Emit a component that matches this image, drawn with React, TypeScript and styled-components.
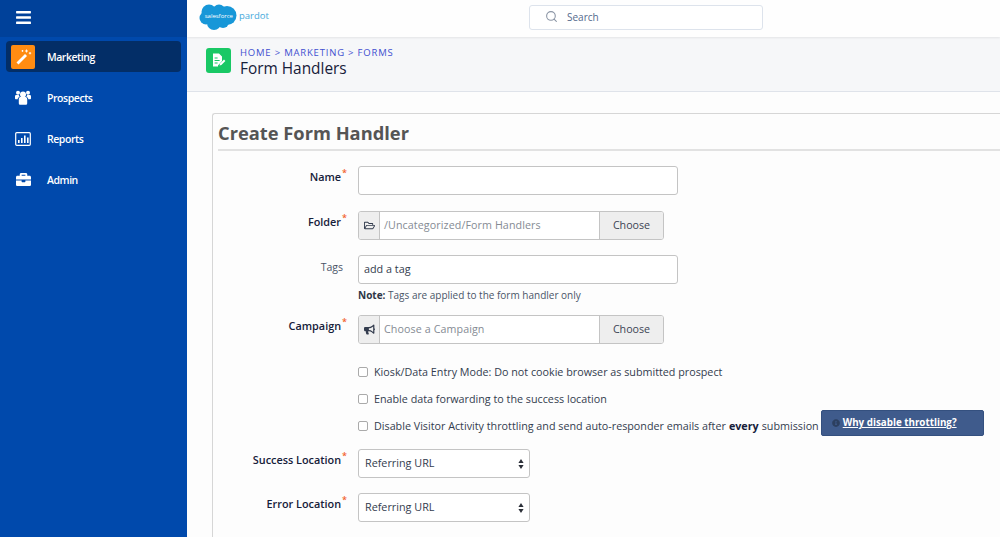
import React from "react";
import styled, { createGlobalStyle } from "styled-components";
import { FaBars, FaBriefcase, FaBullhorn, FaInfoCircle, FaRegFolderOpen } from "react-icons/fa";
import { Search } from "lucide-react";

const GlobalStyle = createGlobalStyle`
  html, body {
    margin: 0;
    padding: 0;
    height: 537px;
    overflow: hidden;
    background: #fdfdfd;
    font-family: "Open Sans", "Noto Sans", Arial, sans-serif;
    color: #16325c;
  }
  * { box-sizing: border-box; }
`;

const Shell = styled.div`
  display: flex;
  width: 1000px;
  height: 537px;
  overflow: hidden;
`;

const Sidebar = styled.aside`
  width: 187px;
  flex: none;
  background: #0049ac;
`;

const SideTop = styled.div`
  height: 37px;
  background: #00419a;
  padding: 9px 0 0 15px;
  color: #fff;
  font-size: 17px;
  line-height: 0;
`;

const SideNav = styled.nav`
  padding: 4px 6px 0;
  display: flex;
  flex-direction: column;
  gap: 10px;
`;

const SideItem = styled.div<{ $active?: boolean }>`
  height: 31px;
  display: flex;
  align-items: center;
  border-radius: 4px;
  padding-left: ${(p) => (p.$active ? "5px" : "9px")};
  background: ${(p) => (p.$active ? "#032e67" : "transparent")};
  color: #fff;
  font-size: 10.5px;
  font-weight: 600;
  letter-spacing: -0.45px;
`;

const SideIcon = styled.span<{ $active?: boolean }>`
  width: ${(p) => (p.$active ? "24px" : "16px")};
  height: ${(p) => (p.$active ? "24px" : "16px")};
  margin-right: ${(p) => (p.$active ? "12px" : "16px")};
  display: flex;
  align-items: center;
  justify-content: center;
  border-radius: 2px;
  background: ${(p) => (p.$active ? "#ff8c12" : "transparent")};
  font-size: 15px;
`;

const Main = styled.main`
  flex: 1;
  min-width: 0;
  display: flex;
  flex-direction: column;
`;

const TopBar = styled.header`
  height: 37px;
  flex: none;
  background: #fefefe;
  padding: 3px 0 0 12px;
  display: flex;
  align-items: flex-start;
  box-shadow: 0 1px 2px rgba(0, 0, 0, 0.08);
  position: relative;
`;

const Logo = styled.svg`
  width: 72px;
  height: 28px;
  flex: none;
`;

const SearchBox = styled.div`
  width: 234px;
  height: 25px;
  margin: 1.5px 0 0 258px;
  display: flex;
  align-items: center;
  gap: 9px;
  padding: 0 0 1px 15px;
  background: #fff;
  border: 1px solid #dde3ec;
  border-radius: 3px;
  font-size: 10px;
  color: #54698d;
`;

const PageHeader = styled.div`
  height: 55px;
  flex: none;
  display: flex;
  align-items: flex-start;
  padding: 11px 0 0 19px;
  background: #f6f7f9;
  border-bottom: 1px solid #dfe3ea;
`;

const HeaderIcon = styled.div`
  width: 25px;
  height: 25px;
  margin-right: 9px;
  border-radius: 3px;
  background: #19c865;
  display: flex;
  align-items: center;
  justify-content: center;
`;

const Crumbs = styled.div`
  font-size: 9.5px;
  line-height: 11px;
  letter-spacing: 0.8px;
  color: #3f4fd0;
  margin-top: -1px;
`;

const PageTitle = styled.h1`
  margin: 2px 0 0;
  font-size: 15.4px;
  line-height: 18px;
  font-weight: 400;
  color: #16203a;
`;

const Panel = styled.section`
  flex: 1;
  margin: 21px 0 0 25px;
  padding: 0 0 0 5px;
  border: 1px solid #d6d6d6;
  border-right: none;
  border-bottom: none;
  border-radius: 3px 0 0 0;
  background: #fdfdfd;
`;

const PanelTitle = styled.h2`
  margin: 0;
  height: 37px;
  padding-top: 6px;
  font-size: 18.3px;
  line-height: 25px;
  font-weight: 700;
  color: #555;
  border-bottom: 2px solid #e2e2e2;
`;

const Form = styled.div`
  padding-top: 15px;
  display: flex;
  flex-direction: column;
`;

const Row = styled.div<{ $gap?: number }>`
  display: grid;
  grid-template-columns: 129px 1fr;
  column-gap: 11px;
  margin-bottom: ${(p) => p.$gap ?? 16}px;
`;

const Label = styled.label<{ $plain?: boolean }>`
  text-align: right;
  font-size: ${(p) => (p.$plain ? "10.5px" : "10.85px")};
  line-height: ${(p) => (p.$plain ? "25px" : "22px")};
  font-weight: ${(p) => (p.$plain ? 400 : 600)};
  color: ${(p) => (p.$plain ? "#4a5568" : "#16203a")};
  padding-right: ${(p) => (p.$plain ? "4px" : "0")};
  white-space: nowrap;
  sup {
    color: #f2622e;
    font-size: 9px;
    line-height: 0;
    margin-left: 1px;
  }
`;

const TextBox = styled.div`
  width: 319.5px;
  height: 29px;
  padding: 0 0 2px 5px;
  display: flex;
  align-items: center;
  background: #fff;
  border: 1px solid #c4c4c4;
  border-radius: 3px;
  font-size: 10.8px;
  color: #333c4e;
`;

const Group = styled.div`
  width: 306px;
  height: 29px;
  display: flex;
  border: 1px solid #c4c4c4;
  border-radius: 3px;
  overflow: hidden;
  background: #fff;
  font-size: 10.7px;
`;

const Addon = styled.span`
  width: 21px;
  flex: none;
  display: flex;
  align-items: center;
  justify-content: center;
  background: #eeeeee;
  border-right: 1px solid #c4c4c4;
  font-size: 11px;
  color: #333c4e;
`;

const GroupValue = styled.span`
  flex: 1;
  padding: 0 0 2px 4px;
  display: flex;
  align-items: center;
  color: #858b94;
  letter-spacing: 0.1px;
`;

const ChooseButton = styled.span`
  width: 64px;
  flex: none;
  display: flex;
  align-items: center;
  justify-content: center;
  padding-bottom: 1px;
  background: #eeeeee;
  border-left: 1px solid #c4c4c4;
  color: #3c4454;
`;

const Note = styled.div`
  margin-top: 4px;
  font-size: 10px;
  line-height: 14px;
  color: #4a5568;
  b { color: #2e3646; font-weight: 700; }
`;

const Checks = styled.div`
  margin: 0 0 10px 140px;
  display: flex;
  flex-direction: column;
`;

const CheckRow = styled.div`
  height: 27px;
  display: flex;
  align-items: center;
  font-size: 10.75px;
  color: #333c4e;
  white-space: nowrap;
  b { font-weight: 700; color: #16203a; margin: 0 3px; }
`;

const CheckBox = styled.span`
  width: 10px;
  height: 10px;
  margin-right: 6px;
  flex: none;
  background: #fff;
  border: 1px solid #aaaaaa;
  border-radius: 2px;
`;

const Hint = styled.span`
  width: 163px;
  height: 26px;
  margin-left: 2px;
  margin-top: -6px;
  display: flex;
  align-items: center;
  padding-left: 10px;
  gap: 3px;
  background: #3f5b8c;
  border: 1px solid #34507f;
  border-radius: 2px;
  font-size: 9.8px;
  font-weight: 700;
  color: #fff;
  svg { color: #2c3f5f; font-size: 8px; flex: none; }
  u { text-underline-offset: 1px; }
`;

const SelectBox = styled.div`
  width: 172px;
  height: 29px;
  padding: 0 5px 2px 6px;
  display: flex;
  align-items: center;
  justify-content: space-between;
  background: #fff;
  border: 1px solid #c4c4c4;
  border-radius: 3px;
  font-size: 10.8px;
  color: #333c4e;
`;

const Carets = styled.svg`
  width: 6px;
  height: 10px;
  margin-top: 2px;
`;

const WandIcon = () => (
  <svg width="18" height="18" viewBox="0 0 18 18" fill="none">
    <path d="M2.500 14.500l8.500-8.500 2 2-8.500 8.500z" fill="#fff" />
    <path d="M12.500 1.500v3M11 3h3M16 4v2.400M14.800 5.200h2.400M8.500 2v1.800M7.600 2.900h1.800" stroke="#fff" strokeWidth="0.9" />
  </svg>
);

const UsersIcon = () => (
  <svg width="16" height="15" viewBox="0 0 16 15" fill="#fff">
    <circle cx="8" cy="4.600" r="3" />
    <circle cx="3" cy="2.800" r="2" />
    <circle cx="13" cy="2.800" r="2" />
    <path d="M3.800 9c0-1.300 1.200-1.900 2-1.900h4.400c.8 0 2 .6 2 1.900v4.200c0 1-.8 1.500-1.500 1.500H5.300c-.7 0-1.500-.5-1.500-1.500z" />
    <path d="M0 6.300c0-.9.700-1.300 1.300-1.300h2.500c.3 1 .6 1.300 1 1.700-1.200.3-2 1.200-2.100 2.500H1c-.6 0-1-.4-1-1zM16 6.300c0-.9-.7-1.300-1.300-1.300h-2.500c-.3 1-.6 1.300-1 1.700 1.200.3 2 1.200 2.100 2.500H15c.6 0 1-.4 1-1z" />
  </svg>
);

const ReportsIcon = () => (
  <svg width="16" height="14" viewBox="0 0 16 14" fill="none">
    <rect x="0.700" y="0.700" width="14.600" height="12.600" rx="1" stroke="#fff" strokeWidth="1.200" />
    <path d="M3 8h1.600v3H3zM6 6h1.600v5H6zM9 3.500h1.600V11H9zM12 5.500h1.600V11H12z" fill="#fff" />
  </svg>
);

const FormIcon = () => (
  <svg width="17" height="17" viewBox="0 0 17 17" fill="none">
    <path d="M3 1.500h6l3 3v4.500l-4 4.500v1H3z" fill="#fff" />
    <path d="M4.600 6h3M4.600 8.500h5M4.600 11h3" stroke="#19c865" strokeWidth="1.100" />
    <path d="M9.500 13.500l.5-2 4-4 1.400 1.400-4 4z" fill="#fff" />
  </svg>
);

const SalesforceLogo = () => (
  <Logo viewBox="0 0 72 28">
    <g fill="#1797d8">
      <circle cx="10" cy="9" r="7.500" />
      <circle cx="20" cy="8" r="6.500" />
      <circle cx="28" cy="12.500" r="9.500" />
      <circle cx="7" cy="15" r="6.500" />
      <circle cx="15" cy="20" r="7" />
      <circle cx="24" cy="19" r="6" />
    </g>
    <text x="5.700" y="14.500" fontSize="6" fill="#fff" fontFamily="Open Sans, sans-serif">
      salesforce
    </text>
    <text x="40" y="16" fontSize="9.500" fill="#45a9dc" fontFamily="Open Sans, sans-serif">
      pardot
    </text>
  </Logo>
);

const SelectCarets = () => (
  <Carets viewBox="0 0 6 10">
    <path d="M3 0l2.600 4H.4zM3 10L.4 6h5.200z" fill="#2b2f38" />
  </Carets>
);

const navItems = [
  { label: "Prospects", icon: <UsersIcon /> },
  { label: "Reports", icon: <ReportsIcon /> },
  { label: "Admin", icon: <FaBriefcase /> },
];

const Required = () => <sup>*</sup>;

export default function App() {
  return (
    <Shell>
      <GlobalStyle />
      <Sidebar>
        <SideTop>
          <FaBars />
        </SideTop>
        <SideNav>
          <SideItem $active>
            <SideIcon $active>
              <WandIcon />
            </SideIcon>
            Marketing
          </SideItem>
          {navItems.map((item) => (
            <SideItem key={item.label}>
              <SideIcon>{item.icon}</SideIcon>
              {item.label}
            </SideItem>
          ))}
        </SideNav>
      </Sidebar>
      <Main>
        <TopBar>
          <SalesforceLogo />
          <SearchBox>
            <Search size={13} color="#8b95a5" />
            Search
          </SearchBox>
        </TopBar>
        <PageHeader>
          <HeaderIcon>
            <FormIcon />
          </HeaderIcon>
          <div>
            <Crumbs>HOME &gt; MARKETING &gt; FORMS</Crumbs>
            <PageTitle>Form Handlers</PageTitle>
          </div>
        </PageHeader>
        <Panel>
          <PanelTitle>Create Form Handler</PanelTitle>
          <Form>
            <Row>
              <Label>
                Name
                <Required />
              </Label>
              <TextBox />
            </Row>
            <Row $gap={15}>
              <Label>
                Folder
                <Required />
              </Label>
              <Group>
                <Addon>
                  <FaRegFolderOpen />
                </Addon>
                <GroupValue>/Uncategorized/Form Handlers</GroupValue>
                <ChooseButton>Choose</ChooseButton>
              </Group>
            </Row>
            <Row $gap={13}>
              <Label $plain>Tags</Label>
              <div>
                <TextBox>add a tag</TextBox>
                <Note>
                  <b>Note:</b> Tags are applied to the form handler only
                </Note>
              </div>
            </Row>
            <Row $gap={14}>
              <Label>
                Campaign
                <Required />
              </Label>
              <Group>
                <Addon>
                  <FaBullhorn />
                </Addon>
                <GroupValue>Choose a Campaign</GroupValue>
                <ChooseButton>Choose</ChooseButton>
              </Group>
            </Row>
            <Checks>
              <CheckRow>
                <CheckBox />
                Kiosk/Data Entry Mode: Do not cookie browser as submitted prospect
              </CheckRow>
              <CheckRow>
                <CheckBox />
                Enable data forwarding to the success location
              </CheckRow>
              <CheckRow>
                <CheckBox />
                Disable Visitor Activity throttling and send auto-responder emails after <b>every</b> submission
                <Hint>
                  <FaInfoCircle />
                  <u>Why disable throttling?</u>
                </Hint>
              </CheckRow>
            </Checks>
            <Row $gap={15}>
              <Label>
                Success Location
                <Required />
              </Label>
              <SelectBox>
                Referring URL
                <SelectCarets />
              </SelectBox>
            </Row>
            <Row>
              <Label>
                Error Location
                <Required />
              </Label>
              <SelectBox>
                Referring URL
                <SelectCarets />
              </SelectBox>
            </Row>
          </Form>
        </Panel>
      </Main>
    </Shell>
  );
}
